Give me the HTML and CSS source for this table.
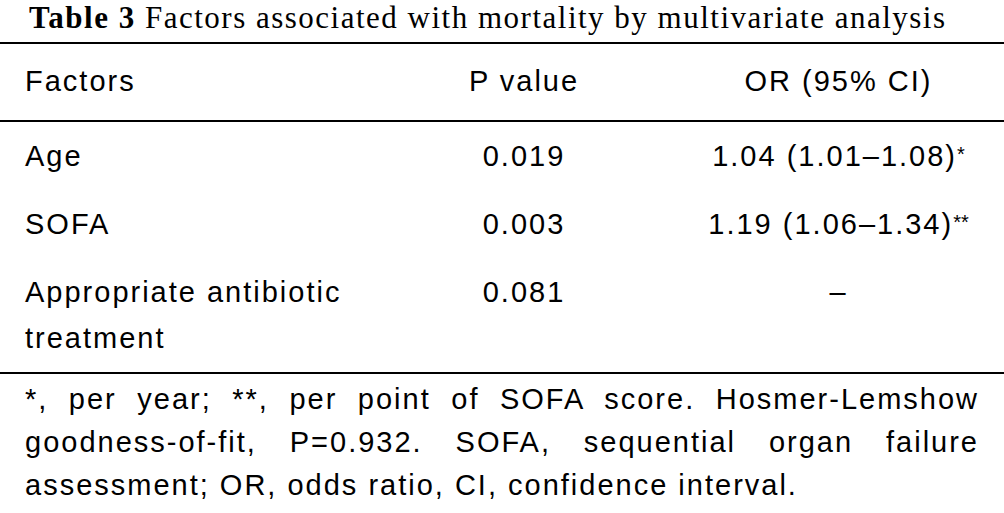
FILE: index.html
```html
<!DOCTYPE html>
<html lang="en">
<head>
<meta charset="utf-8">
<title>Table 3</title>
<link rel="stylesheet" href="styles.css">
</head>
<body>
<div class="page">
  <h1 class="caption"><b>Table 3</b> Factors associated with mortality by multivariate analysis</h1>
  <table class="data">
    <colgroup>
      <col class="c1"><col class="c2"><col class="c3">
    </colgroup>
    <thead>
      <tr><th class="left">Factors</th><th>P value</th><th>OR (95% CI)</th></tr>
    </thead>
    <tbody>
      <tr><td class="left">Age</td><td>0.019</td><td>1.04 (1.01–1.08)<sup>*</sup></td></tr>
      <tr><td class="left">SOFA</td><td>0.003</td><td>1.19 (1.06–1.34)<sup>**</sup></td></tr>
      <tr><td class="left">Appropriate antibiotic<br>treatment</td><td>0.081</td><td>–</td></tr>
    </tbody>
  </table>
  <div class="notes">
    <span class="line just">*, per year; **, per point of SOFA score. Hosmer-Lemshow</span>
    <span class="line just">goodness-of-fit, P=0.932. SOFA, sequential organ failure</span>
    <span class="line">assessment; OR, odds ratio, CI, confidence interval.</span>
  </div>
</div>
</body>
</html>
```
FILE: styles.css
```css
html, body {
  margin: 0;
  padding: 0;
  background: #fff;
  color: #000;
}
.page {
  width: 1004px;
  height: 513px;
  overflow: hidden;
}
.caption {
  margin: 0;
  height: 42px;
  padding-left: 29px;
  font-family: "Liberation Serif", "Times New Roman", serif;
  font-weight: normal;
  font-size: 31px;
  letter-spacing: 1.5px;
  line-height: 35px;
  white-space: nowrap;
}
.caption b {
  font-weight: bold;
}
.data {
  width: 1004px;
  border-collapse: collapse;
  table-layout: fixed;
  font-family: "Liberation Sans", Arial, sans-serif;
  font-size: 29px;
  letter-spacing: 2px;
  line-height: 46px;
}
.c1 { width: 375px; }
.c2 { width: 298px; }
.c3 { width: 331px; }
.data thead tr {
  border-top: 2px solid #000;
  border-bottom: 2px solid #000;
}
.data th {
  font-weight: normal;
  padding: 14px 0 16px;
  text-align: center;
  vertical-align: top;
}
.data td {
  padding: 11px 0;
  text-align: center;
  vertical-align: top;
}
.data .left {
  text-align: left;
  padding-left: 25px;
}
.data tbody tr:last-child {
  border-bottom: 2px solid #000;
}
.data sup {
  font-size: 20px;
  letter-spacing: 0;
  line-height: 0;
  vertical-align: 5px;
}
.notes {
  padding: 4px 25px 0 25px;
  font-family: "Liberation Sans", Arial, sans-serif;
  font-size: 29px;
  letter-spacing: 2px;
  line-height: 43px;
}
.line {
  display: block;
  white-space: nowrap;
}
.just {
  text-align: justify;
  text-align-last: justify;
}
```
